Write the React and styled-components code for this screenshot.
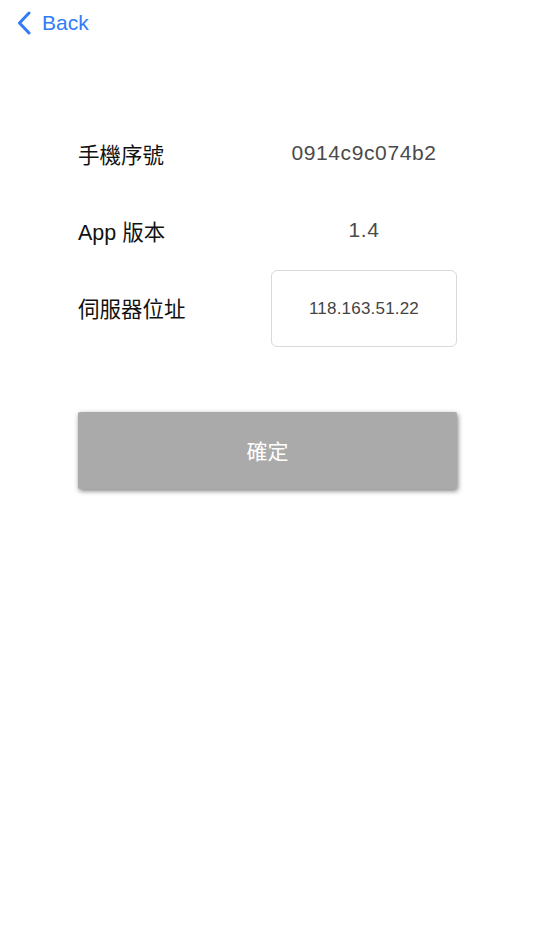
import React, { useState } from 'react'
import styled, { createGlobalStyle } from 'styled-components'

const GlobalStyle = createGlobalStyle`
    html, body {
        margin: 0;
        padding: 0;
        background: #fff;
    }
    body {
        font-family: "Liberation Sans", "Noto Sans CJK TC", sans-serif;
        -webkit-font-smoothing: antialiased;
    }
`

const Screen = styled.div`
    width: 534px;
    height: 950px;
    background: #fff;
    display: flex;
    flex-direction: column;
`
const NavBar = styled.div`
    height: 46px;
    display: flex;
    align-items: center;
    padding-left: 17px;
`
const BackButton = styled.button`
    display: flex;
    align-items: center;
    gap: 11px;
    border: none;
    background: none;
    padding: 0;
    color: #2f7cf6;
    font-family: inherit;
    font-size: 21px;
    cursor: pointer;
`
const Form = styled.div`
    margin: 70px 0 0 78px;
    width: 379px;
    display: flex;
    flex-direction: column;
`
const Row = styled.div`
    display: grid;
    grid-template-columns: 193px 186px;
    height: 77px;
    align-items: center;
`
const Label = styled.div`
    font-size: 21.5px;
    color: #111;
    margin-bottom: 3px;
`
const Value = styled.div`
    font-size: 21px;
    letter-spacing: 0.6px;
    color: #4a4a4a;
    text-align: center;
    margin-bottom: 3px;
`
const Input = styled.input`
    box-sizing: border-box;
    width: 186px;
    height: 77px;
    border: 1px solid #d9d9d9;
    border-radius: 6px;
    text-align: center;
    font-family: inherit;
    font-size: 17px;
    letter-spacing: 0.2px;
    color: #444;
    outline: none;
`
const Submit = styled.button`
    margin-top: 65px;
    height: 77px;
    padding-bottom: 3px;
    border: none;
    border-radius: 2px;
    background: #aaaaaa;
    color: #fff;
    font-family: inherit;
    font-size: 21px;
    box-shadow: 1px 2px 5px rgba(0, 0, 0, 0.5);
`

function Chevron() {
    return (
        <svg width="14" height="24" viewBox="0 0 14 24">
            <path d="M12 2 L2.5 12 L12 22" fill="none" stroke="currentColor" strokeWidth="3" strokeLinecap="round" strokeLinejoin="round"/>
        </svg>
    )
}

export default function App() {
    let [server, setServer] = useState('118.163.51.22')

    return (
        <Screen>
            <GlobalStyle/>
            <NavBar>
                <BackButton><Chevron/>Back</BackButton>
            </NavBar>
            <Form>
                <Row>
                    <Label>手機序號</Label>
                    <Value>0914c9c074b2</Value>
                </Row>
                <Row>
                    <Label>App 版本</Label>
                    <Value>1.4</Value>
                </Row>
                <Row>
                    <Label>伺服器位址</Label>
                    <Input value={server} onChange={e => setServer(e.target.value)}/>
                </Row>
                <Submit>確定</Submit>
            </Form>
        </Screen>
    )
}
